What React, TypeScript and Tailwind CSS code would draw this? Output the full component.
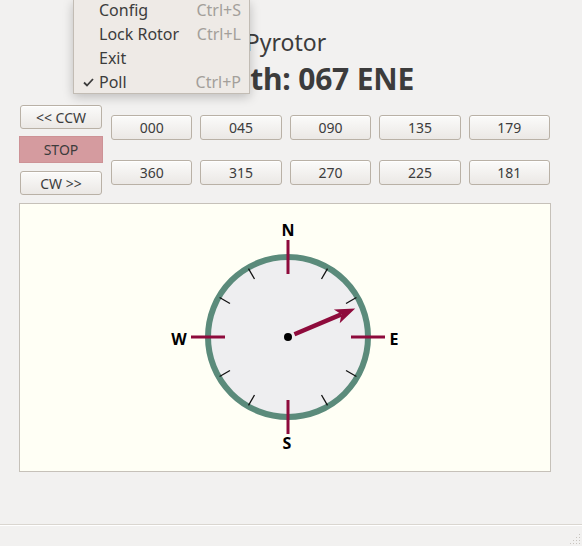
import React from "react";

const FONT = { fontFamily: '"Noto Sans", "Open Sans", sans-serif' };

function Btn({ label, className = "" }: { label: string; className?: string }) {
  return (
    <button
      className={`flex items-center justify-center rounded-[3px] border border-[#b9b1a6] bg-gradient-to-b from-[#fbfbfa] to-[#ebe8e5] text-[14px] text-[#3c3c3c] shadow-[inset_0_1px_0_#ffffff] ${className}`}
    >
      {label}
    </button>
  );
}

function Compass({ heading }: { heading: number }) {
  const cx = 268;
  const cy = 133;
  const minor = [30, 60, 120, 150, 210, 240, 300, 330];
  const pt = (deg: number, r: number) => {
    const a = (deg * Math.PI) / 180;
    return [cx + r * Math.sin(a), cy - r * Math.cos(a)];
  };
  return (
    <svg width="530" height="267" viewBox="0 0 530 267">
      <circle cx={cx} cy={cy} r={80} fill="#eeeef0" stroke="#5b8b7b" strokeWidth={6} />
      {minor.map((d) => {
        const [x1, y1] = pt(d, 67);
        const [x2, y2] = pt(d, 79);
        return <line key={d} x1={x1} y1={y1} x2={x2} y2={y2} stroke="#111" strokeWidth={1.3} />;
      })}
      {[0, 90, 180, 270].map((d) => {
        const [x1, y1] = pt(d, 63);
        const [x2, y2] = pt(d, 97);
        return <line key={d} x1={x1} y1={y1} x2={x2} y2={y2} stroke="#8e0b3c" strokeWidth={3} />;
      })}
      <g fontFamily='"Noto Sans", sans-serif' fontWeight="700" fontSize="16" fill="#000" textAnchor="middle" dominantBaseline="central">
        <text x={cx} y={cy - 107}>N</text>
        <text x={cx - 1} y={cy + 106}>S</text>
        <text x={cx + 106} y={cy + 2}>E</text>
        <text x={cx - 109} y={cy + 2}>W</text>
      </g>
      <g transform={`rotate(${heading} ${cx} ${cy})`}>
        <line x1={cx} y1={cy - 7} x2={cx} y2={cy - 58} stroke="#8e0b3c" strokeWidth={4.5} />
        <polygon
          points={`${cx},${cy - 73} ${cx - 7.5},${cy - 53} ${cx},${cy - 58} ${cx + 7.5},${cy - 53}`}
          fill="#8e0b3c"
        />
      </g>
      <circle cx={cx} cy={cy} r={4} fill="#000" />
    </svg>
  );
}

export default function App() {
  const row1 = ["000", "045", "090", "135", "179"];
  const row2 = ["360", "315", "270", "225", "181"];

  return (
    <div className="relative flex h-[546px] w-[582px] flex-col overflow-hidden bg-[#f2f1f0] text-[#3c3c3c]" style={FONT}>
      <div className="flex flex-col items-center pr-[10px] pt-[26px]">
        <div className="text-[23px] leading-[32px]">Pyrotor</div>
        <div className="mt-[1px] text-[30px] font-bold leading-[40px] tracking-[-0.2px] text-[#3c3c3c]">Azimuth: 067 ENE</div>
      </div>

      <div className="mt-[6px] flex gap-[8px] px-[19px]">
        <div className="flex w-[84px] flex-col items-center">
          <Btn label="<< CCW" className="h-[24px] w-[82px]" />
          <div className="mt-[7px] flex h-[27px] w-[84px] items-center justify-center bg-[#d59b9f] text-[14px] text-[#3c3c3c] shadow-[inset_0_0_0_1px_#cd9296]">
            STOP
          </div>
          <Btn label="CW >>" className="mt-[8px] h-[24px] w-[82px]" />
        </div>
        <div className="mt-[10px] grid h-[70px] w-[439px] grid-cols-5 content-between gap-x-[8px]">
          {row1.map((l) => (
            <Btn key={l} label={l} className="h-[25px]" />
          ))}
          {row2.map((l) => (
            <Btn key={l} label={l} className="h-[25px]" />
          ))}
        </div>
      </div>

      <div className="mx-[19px] mt-[8px] h-[269px] w-[532px] border border-[#c6c1b9] bg-[#fffff5]">
        <Compass heading={67} />
      </div>

      <div className="mt-auto flex h-[22px] justify-end border-t border-[#dad6d0] pr-[1px] shadow-[inset_0_1px_0_#ffffff]">
        <svg width="12" height="12" viewBox="0 0 12 12" className="mt-auto mb-[1px]">
          {[
            [10, 2], [10, 5], [7, 5], [10, 8], [7, 8], [4, 8], [10, 11], [7, 11], [4, 11], [1, 11],
          ].map(([x, y], i) => (
            <rect key={i} x={x} y={y - 1} width="1" height="1" fill="#c8c4bf" />
          ))}
        </svg>
      </div>

      <div className="absolute left-[73px] top-0 h-[94px] w-[177px] border border-t-0 border-[#c2bcb4] bg-[#eeeae6] pt-0 text-[16px] shadow-[0_3px_10px_rgba(0,0,0,0.22)]">
        <div className="-mt-[2px]">
          {[
            ["Config", "Ctrl+S", false],
            ["Lock Rotor", "Ctrl+L", false],
            ["Exit", "", false],
            ["Poll", "Ctrl+P", true],
          ].map(([name, key, checked], i) => (
            <div key={i} className="relative flex h-[24px] items-center justify-between pl-[25px] pr-[8px]">
              {checked && (
                <svg className="absolute left-[9px] top-[8px]" width="11" height="9" viewBox="0 0 11 9">
                  <path d="M1 4.5 L4 7.5 L10 1" fill="none" stroke="#3c3c3c" strokeWidth="1.8" />
                </svg>
              )}
              <span className="text-[#3c3c3c]">{name as string}</span>
              <span className="text-[#a39f9a]">{key as string}</span>
            </div>
          ))}
        </div>
      </div>
    </div>
  );
}
